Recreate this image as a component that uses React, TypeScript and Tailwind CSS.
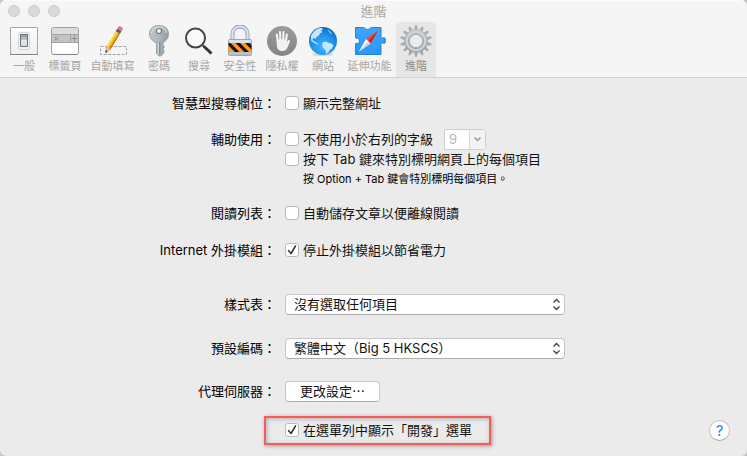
import type { ReactNode } from "react";

const FONT = "font-['Inter','Noto_Sans_CJK_TC',sans-serif]";

function GeneralIcon() {
  return (
    <svg width="32" height="32" viewBox="0 0 32 32" aria-hidden="true">
      <defs>
        <linearGradient id="plate" x1="0" y1="0" x2="0" y2="1">
          <stop offset="0" stopColor="#fdfdfd" />
          <stop offset="1" stopColor="#eceeef" />
        </linearGradient>
        <linearGradient id="rocker" x1="0" y1="0" x2="0" y2="1">
          <stop offset="0" stopColor="#8f9497" />
          <stop offset="0.45" stopColor="#c3c7ca" />
          <stop offset="0.5" stopColor="#e4e7e9" />
          <stop offset="1" stopColor="#d3d8dc" />
        </linearGradient>
      </defs>
      <rect x="2.5" y="2.5" width="27" height="27" rx="0.5" fill="url(#plate)" stroke="#a6a6a6" />
      <path d="M2 29.5h28" stroke="#858585" />
      <rect x="10.5" y="7.5" width="11" height="17" rx="1.5" fill="#f4f5f5" stroke="#d3d6d8" />
      <rect x="12.5" y="9.5" width="7" height="12" fill="url(#rocker)" stroke="#6b7073" />
    </svg>
  );
}

function TabsIcon() {
  return (
    <svg width="32" height="32" viewBox="0 0 32 32" aria-hidden="true">
      <rect x="2.5" y="2.5" width="27" height="27" rx="2" fill="#fff" stroke="#a09e9e" />
      <path d="M3 9.5V4.5Q3 3 4.5 3h23Q29 3 29 4.5V9.5z" fill="#e0dcdc" />
      <rect x="3" y="9.5" width="26" height="8" fill="#c6c3c3" />
      <path d="M3 9.5h26M3 17.5h26M21.500 9.5v8" stroke="#a5a2a2" />
      <path d="M5.5 11.5l4 4m0-4l-4 4" stroke="#8f8c8c" />
      <path d="M22.5 13.5h6M25.5 10.5v6" stroke="#8f8c8c" />
      <path d="M4 29.5h24" stroke="#808080" />
    </svg>
  );
}

function PencilIcon() {
  return (
    <svg width="32" height="32" viewBox="0 0 32 32" aria-hidden="true">
      <rect x="3.5" y="21.5" width="26" height="8" fill="none" stroke="#a3a3a3" strokeDasharray="3 1.5" />
      <g transform="translate(8.5 28) rotate(31)">
        <path d="M0 0L-2.500-6h5z" fill="#e9c79b" stroke="#a8875c" strokeWidth="0.5" />
        <path d="M0 0L-1-2.500h2z" fill="#333" />
        <path d="M-2.500-6h2v-18h-2z" fill="#ffd93b" />
        <path d="M-0.800-6h1.800v-18h-1.800z" fill="#fcb813" />
        <path d="M1-6h1.500v-18H1z" fill="#b97908" />
        <path d="M-2.500-24h5v-3h-5z" fill="#53636d" />
        <path d="M-2.500-27h5v-2q0-1.500-2.500-1.500T-2.500-29z" fill="#e66d8c" />
      </g>
    </svg>
  );
}

function KeyIcon() {
  return (
    <svg width="32" height="32" viewBox="0 0 32 32" aria-hidden="true">
      <defs>
        <linearGradient id="steel" x1="0" y1="0" x2="1" y2="0">
          <stop offset="0" stopColor="#bdc6ca" />
          <stop offset="0.5" stopColor="#adb7bc" />
          <stop offset="1" stopColor="#8e9ca3" />
        </linearGradient>
      </defs>
      <path
        d="M16 0.500C22 0.500 25.500 4 25.500 9C25.500 13 23 16 20 18V20l1 1v2l-1.500 1 1.500 1.500v2L18 31h-2l-2.500-2.500V18C9.500 16 6.500 13 6.500 9C6.500 4 10 0.500 16 0.500z"
        fill="url(#steel)"
        stroke="#8b999f"
        strokeWidth="0.8"
      />
      <path d="M8.500 8Q9.500 2.500 16 2t7.500 6" fill="none" stroke="#d0d8dc" strokeWidth="1.5" />
      <circle cx="16" cy="6" r="2.5" fill="#f5f5f5" stroke="#738189" strokeWidth="1.2" />
      <path d="M16.800 17v12.500" stroke="#6d7c84" />
      <path d="M15.300 18v11" stroke="#d4dce0" />
    </svg>
  );
}

function SearchIcon() {
  return (
    <svg width="32" height="32" viewBox="0 0 32 32" aria-hidden="true">
      <circle cx="12.5" cy="13" r="9.5" fill="#fafafa" stroke="#454545" strokeWidth="2" />
      <path d="M19.500 20l2 2" stroke="#454545" strokeWidth="2" />
      <path d="M21 21.500l7.500 7" stroke="#333" strokeWidth="3" />
    </svg>
  );
}

function LockIcon() {
  return (
    <svg width="32" height="32" viewBox="0 0 32 32" aria-hidden="true">
      <defs>
        <clipPath id="band">
          <rect x="4.5" y="18" width="23" height="9" />
        </clipPath>
        <linearGradient id="case" x1="0" y1="0" x2="0" y2="1">
          <stop offset="0" stopColor="#dde5f0" />
          <stop offset="1" stopColor="#b1bed0" />
        </linearGradient>
      </defs>
      <path d="M8.500 16V9a7.500 7.500 0 0 1 15 0V16" fill="none" stroke="#8fa0b8" strokeWidth="4" />
      <path d="M8.500 16V9a7.500 7.500 0 0 1 15 0V16" fill="none" stroke="#dbe4f0" strokeWidth="2.2" />
      <rect x="4.500" y="14.5" width="23" height="16" rx="1" fill="url(#case)" stroke="#94a4ba" />
      <rect x="4.500" y="18" width="23" height="9" fill="#ff9a1f" />
      <g clipPath="url(#band)" fill="#1a1208">
        <path d="M4 18h2.500l9 9H11l-7-7zM11.500 18H16l9 9h-4.500zM21 18h4.500l3 3v4.500z" />
      </g>
    </svg>
  );
}

function PrivacyIcon() {
  return (
    <svg width="32" height="32" viewBox="0 0 32 32" aria-hidden="true">
      <defs>
        <linearGradient id="disc" x1="0" y1="0" x2="0" y2="1">
          <stop offset="0" stopColor="#9c9c9c" />
          <stop offset="1" stopColor="#848484" />
        </linearGradient>
      </defs>
      <circle cx="16" cy="16" r="15" fill="url(#disc)" />
      <g stroke="#f2f2f2" strokeWidth="2.1" strokeLinecap="round" fill="none">
        <path d="M11.800 17L10.800 9.500M14.400 16L14 7M17.200 16L17.500 7M19.800 17L20.800 9.500" />
        <path d="M19.800 22l3-6" />
      </g>
      <path d="M10.800 14.500h10v4l1.700-2.800q1.600 0 1.200 1.500l-2.700 6.300q-1.200 2.500-4.600 2.500c-4 0-5.600-2.500-5.600-6z" fill="#f2f2f2" />
    </svg>
  );
}

function GlobeIcon() {
  return (
    <svg width="32" height="32" viewBox="0 0 32 32" aria-hidden="true">
      <defs>
        <radialGradient id="ocean" cx="0.5" cy="0.7" r="0.7">
          <stop offset="0" stopColor="#3fb6ff" />
          <stop offset="0.6" stopColor="#1f90ea" />
          <stop offset="1" stopColor="#1267c0" />
        </radialGradient>
      </defs>
      <ellipse cx="16" cy="29.5" rx="11" ry="1.5" fill="#d2d2d2" />
      <circle cx="16" cy="16" r="14" fill="url(#ocean)" />
      <path
        d="M4 11Q6 6 11 3.500l4-0.500 1 1.500-2 1 1.500 1.500-2.500 1.500-1 2-2.500 1.500-1 2-1.500-1-1.500 1 0.500 2 2 0.500 1.500 1.500 2 0.500-1 1-3-1.500-3-1.500L4 14z"
        fill="#c6e6fb"
      />
      <path d="M15.500 17.500l3-1 3.500 1.500 2.500 0.500 2 2-1.500 3-2.500 1.500-1 2.500-2.500 1.500-0.500-4-2-1.500-1.500-3z" fill="#c6e6fb" />
      <path d="M20 4.500l3 1.500 2 2.500-1.500 0.500-1.500-2z" fill="#7fc4f5" />
    </svg>
  );
}

function ExtensionIcon() {
  return (
    <svg width="32" height="32" viewBox="0 0 32 32" aria-hidden="true">
      <defs>
        <linearGradient id="puzzle" x1="0" y1="0" x2="0" y2="1">
          <stop offset="0" stopColor="#3fa4fb" />
          <stop offset="1" stopColor="#2c97f7" />
        </linearGradient>
      </defs>
      <path
        d="M1.500 2.500H9.500q1 0 1.500 1 0.500 1 2.500 1t2.500-1q0.500-1 1.500-1h9.500v10q0 1 1.500 0.500 3-1.500 3 2.500T28.500 18q-1.500-0.500-1.500 0.500v11h-25.500V19q0-1 1.500-0.500 2.500 0.500 2.500-2.500T3 13q-1.500 0.500-1.500-0.500z"
        fill="url(#puzzle)"
        stroke="#2583d6"
      />
      <path d="M24 5.500L12 14l4.500 4.500z" fill="#f8433b" />
      <path d="M24 5.500L16.500 18.500l-2.200-2.200z" fill="#c9221e" />
      <path d="M5 26.500L12 14l4.500 4.500z" fill="#fff" />
      <path d="M5 26.500L16.500 18.500l-2.200-2.200z" fill="#c9d5de" />
    </svg>
  );
}

const TOOTH_COUNT = 14;
const teeth = Array.from({ length: TOOTH_COUNT }, (_, i) => (i * 360) / TOOTH_COUNT);

function GearIcon() {
  return (
    <svg width="32" height="32" viewBox="0 0 32 32" aria-hidden="true">
      <defs>
        <linearGradient id="gear" x1="0" y1="0" x2="0" y2="1">
          <stop offset="0" stopColor="#bcc1c3" />
          <stop offset="1" stopColor="#9ba1a4" />
        </linearGradient>
      </defs>
      {teeth.map((angle) => (
        <path key={angle} d="M14 5.500l1-5.200h2L18 5.500z" fill="#a6acaf" transform={`rotate(${angle} 16 16)`} />
      ))}
      <circle cx="16" cy="16" r="9.300" fill="none" stroke="url(#gear)" strokeWidth="5" />
      <circle cx="16" cy="16" r="9.300" fill="none" stroke="#d0d4d5" strokeWidth="2.200" />
      <circle cx="16" cy="16" r="6.700" fill="#ececec" stroke="#979ea1" strokeWidth="0.800" />
    </svg>
  );
}

type Tab = { label: string; icon: ReactNode; width: string; active?: boolean };

const tabs: Tab[] = [
  { label: "一般", icon: <GeneralIcon />, width: "w-10" },
  { label: "標籤頁", icon: <TabsIcon />, width: "w-[42px]" },
  { label: "自動填寫", icon: <PencilIcon />, width: "w-[53px]" },
  { label: "密碼", icon: <KeyIcon />, width: "w-10" },
  { label: "搜尋", icon: <SearchIcon />, width: "w-10" },
  { label: "安全性", icon: <LockIcon />, width: "w-[42px]" },
  { label: "隱私權", icon: <PrivacyIcon />, width: "w-[42px]" },
  { label: "網站", icon: <GlobeIcon />, width: "w-10" },
  { label: "延伸功能", icon: <ExtensionIcon />, width: "w-[53px]" },
  { label: "進階", icon: <GearIcon />, width: "w-10", active: true },
];

function Row({ label, htmlFor, className = "", children }: { label: string; htmlFor: string; className?: string; children: ReactNode }) {
  return (
    <div className={`grid grid-cols-[276px_minmax(0,1fr)] items-start gap-x-[9px] ${className}`}>
      <label htmlFor={htmlFor} className="text-right whitespace-nowrap text-black">
        {label}
      </label>
      <div>{children}</div>
    </div>
  );
}

function Check({ id, label, checked = false }: { id: string; label: string; checked?: boolean }) {
  return (
    <label htmlFor={id} className="flex w-fit items-center gap-1 whitespace-nowrap">
      <span className="grid size-3.5 shrink-0">
        <input
          id={id}
          type="checkbox"
          defaultChecked={checked}
          className="peer col-start-1 row-start-1 size-3.5 appearance-none rounded-[3px] border border-[#b9b9b9] bg-white"
        />
        <svg
          viewBox="0 0 14 14"
          aria-hidden="true"
          className="pointer-events-none invisible col-start-1 row-start-1 size-3.5 peer-checked:visible"
        >
          <path d="M3.500 7.500l2.500 3 4.500-7.500" fill="none" stroke="#333" strokeWidth="1.5" strokeLinecap="round" strokeLinejoin="round" />
        </svg>
      </span>
      {label}
    </label>
  );
}

function Popup({ id, value }: { id: string; value: string }) {
  return (
    <div className="grid w-[280px] items-center">
      <select
        id={id}
        className="col-start-1 row-start-1 h-[21px] w-full appearance-none rounded border border-[#c6c6c6] border-b-[#ababab] bg-white pr-6 pl-2 leading-[19px]"
      >
        <option>{value}</option>
      </select>
      <svg
        width="9"
        height="13"
        viewBox="0 0 9 13"
        aria-hidden="true"
        className="pointer-events-none col-start-1 row-start-1 mr-1 justify-self-end"
      >
        <path d="M1.500 4.500l3-3 3 3M1.500 8.500l3 3 3-3" fill="none" stroke="#444" strokeWidth="1.4" />
      </svg>
    </div>
  );
}

function WindowButton({ label }: { label: string }) {
  return <button type="button" aria-label={label} className="size-3 rounded-full border border-[#cbcbcb] bg-[#d9d9d9]" />;
}

export default function App() {
  return (
    <div lang="zh-Hant" className="min-h-screen bg-[#c4c4c4]">
      <main className={`flex min-h-screen flex-col overflow-hidden rounded-md bg-[#ebebeb] text-[13px] leading-5 text-[#111] ${FONT}`}>
        <header className="border-t border-b border-t-[#fdfdfd] border-b-[#d2d2d2] bg-[#f5f5f5]">
          <div className="grid h-[21px] grid-cols-[1fr_auto_1fr] items-start px-2">
            <div className="flex gap-2 pt-1">
              <WindowButton label="關閉" />
              <WindowButton label="縮到最小" />
              <WindowButton label="縮放" />
            </div>
            <h1 className="font-normal text-[#a9a9a9]">進階</h1>
          </div>
          <nav className="flex px-1">
            {tabs.map((tab) => (
              <button
                key={tab.label}
                type="button"
                aria-pressed={!!tab.active}
                className={`flex h-[55px] flex-col items-center rounded-t pt-[3px] text-[11px] leading-[18px] whitespace-nowrap ${tab.width} ${
                  tab.active ? "bg-[#e6e6e6] text-[#8c8c8c]" : "text-[#a6a6a6]"
                }`}
              >
                {tab.icon}
                {tab.label}
              </button>
            ))}
          </nav>
        </header>

        <form className="pt-[15px] pb-2">
          <Row label="智慧型搜尋欄位：" htmlFor="full-url">
            <Check id="full-url" label="顯示完整網址" />
          </Row>

          <Row label="輔助使用：" htmlFor="min-font" className="mt-4">
            <div className="flex h-5 items-center gap-[11px]">
              <Check id="min-font" label="不使用小於右列的字級" />
              <div className="flex h-[21px] w-[42px] overflow-hidden rounded-r border border-[#cfcfcf] bg-white">
                <input aria-label="字級" disabled defaultValue="9" className="w-6 pl-1 text-[#b5b5b5]" />
                <button
                  type="button"
                  disabled
                  aria-label="選擇字級"
                  className="flex flex-1 items-center justify-center border-l border-[#dcdcdc] bg-[#f3f3f3]"
                >
                  <svg width="9" height="6" viewBox="0 0 9 6" aria-hidden="true">
                    <path d="M1.500 1.500l3 3 3-3" fill="none" stroke="#999" strokeWidth="1.5" />
                  </svg>
                </button>
              </div>
            </div>
            <Check id="tab-key" label="按下 Tab 鍵來特別標明網頁上的每個項目" />
            <p className="pl-[18px] text-[11px] whitespace-nowrap text-black">按 Option + Tab 鍵會特別標明每個項目。</p>
          </Row>

          <Row label="閱讀列表：" htmlFor="offline" className="mt-3.5">
            <Check id="offline" label="自動儲存文章以便離線閱讀" />
          </Row>

          <Row label="Internet 外掛模組：" htmlFor="power" className="mt-[17px]">
            <Check id="power" label="停止外掛模組以節省電力" checked />
          </Row>

          <Row label="樣式表：" htmlFor="stylesheet" className="mt-[34px]">
            <Popup id="stylesheet" value="沒有選取任何項目" />
          </Row>

          <Row label="預設編碼：" htmlFor="encoding" className="mt-[23px]">
            <Popup id="encoding" value="繁體中文（Big 5 HKSCS）" />
          </Row>

          <Row label="代理伺服器：" htmlFor="proxies" className="mt-[22px]">
            <button
              id="proxies"
              type="button"
              className="h-[21px] w-[95px] rounded border border-[#c6c6c6] border-b-[#ababab] bg-white leading-[19px] whitespace-nowrap"
            >
              更改設定⋯
            </button>
          </Row>

          <div className="mt-3.5 flex items-start justify-between pr-[17px] pl-[264px]">
            <div className="border-2 border-[#fb5a59] pt-0.5 pr-[17px] pb-[3px] pl-[19px] shadow-[1px_1px_4px_#00000059,inset_1px_1px_4px_#00000040]">
              <Check id="develop" label="在選單列中顯示「開發」選單" checked />
            </div>
            <button
              type="button"
              aria-label="輔助說明"
              className="mt-1 size-[21px] rounded-full border border-[#c4c4c4] border-b-[#ababab] bg-white text-[15px] leading-[19px] text-[#1a82fb]"
            >
              ?
            </button>
          </div>
        </form>
      </main>
    </div>
  );
}
